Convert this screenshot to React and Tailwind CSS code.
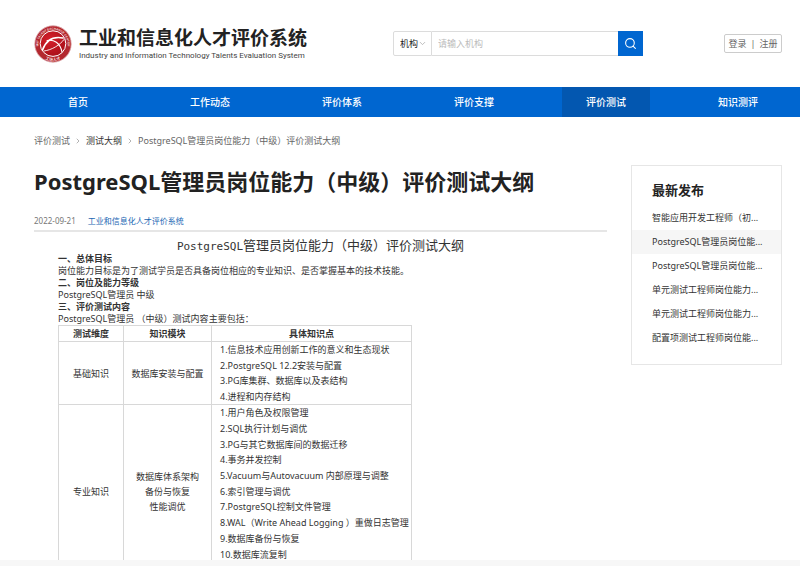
import React, { useState } from 'react';
import { ChevronDown, ChevronRight, Search } from 'lucide-react';

const navItems = ['首页', '工作动态', '评价体系', '评价支撑', '评价测试', '知识测评'];

const latest = [
  '智能应用开发工程师（初...',
  'PostgreSQL管理员岗位能...',
  'PostgreSQL管理员岗位能...',
  '单元测试工程师岗位能力...',
  '单元测试工程师岗位能力...',
  '配置项测试工程师岗位能...',
];

const sections = [
  { heading: '一、总体目标', text: '岗位能力目标是为了测试学员是否具备岗位相应的专业知识、是否掌握基本的技术技能。' },
  { heading: '二、岗位及能力等级', text: 'PostgreSQL管理员 中级' },
  { heading: '三、评价测试内容', text: 'PostgreSQL管理员 （中级）测试内容主要包括：' },
];

const outline = [
  {
    area: '基础知识',
    height: 'h-[62px]',
    modules: ['数据库安装与配置'],
    points: [
      '1.信息技术应用创新工作的意义和生态现状',
      '2.PostgreSQL 12.2安装与配置',
      '3.PG库集群、数据库以及表结构',
      '4.进程和内存结构',
    ],
  },
  {
    area: '专业知识',
    height: 'h-[157px] mb-4',
    modules: ['数据库体系架构', '备份与恢复', '性能调优'],
    points: [
      '1.用户角色及权限管理',
      '2.SQL执行计划与调优',
      '3.PG与其它数据库间的数据迁移',
      '4.事务并发控制',
      '5.Vacuum与Autovacuum 内部原理与调整',
      '6.索引管理与调优',
      '7.PostgreSQL控制文件管理',
      '8.WAL（Write Ahead Logging ）重做日志管理',
      '9.数据库备份与恢复',
      '10.数据库流复制',
    ],
  },
];

const Emblem = () => (
  <svg viewBox="0 0 38 38" className="size-[38px] shrink-0" aria-hidden="true">
    <defs>
      <path id="ring-top" d="M6.6 27 A14.6 14.6 0 1 1 31.4 27" />
      <path id="ring-bottom" d="M8 32 A17 17 0 0 0 30 32" />
      <radialGradient id="ball" cx="40%" cy="35%" r="70%">
        <stop offset="0%" stopColor="#d5202c" />
        <stop offset="100%" stopColor="#a80f18" />
      </radialGradient>
    </defs>
    <circle cx="19" cy="19" r="18.2" fill="#b3282f" stroke="#d9a5a8" strokeWidth="0.8" />
    <text fontSize="3" fontWeight="700" fill="#f3d9da" fontFamily="Liberation Sans, sans-serif">
      <textPath href="#ring-top" startOffset="50%" textAnchor="middle">MIIT TALENT EXCHANGE CENTER</textPath>
    </text>
    <text fontSize="4" fontWeight="700" fill="#f3d9da" fontFamily="Noto Sans CJK SC, sans-serif">
      <textPath href="#ring-bottom" startOffset="50%" textAnchor="middle">工信人才</textPath>
    </text>
    <circle cx="19" cy="18.6" r="12.8" fill="url(#ball)" stroke="#fff" strokeWidth="1" />
    <g fill="none" stroke="#fff" strokeLinecap="round">
      <path d="M8.5 25 C12 15.5 19 11 29 13" strokeWidth="1.7" />
      <path d="M13 15.5 C20 14 26 18 28 27" strokeWidth="1.1" />
      <path d="M10 26 C18 25 26 20 30 14.5" strokeWidth="0.9" />
    </g>
  </svg>
);

const Header = () => {
  const [keyword, setKeyword] = useState('');

  return (
    <header className="grid grid-cols-[359px_minmax(0,250px)_1fr] items-center pl-[34px] pr-[18px] h-[87px] shrink-0">
      <a href="#" className="flex items-center gap-[7px]">
        <Emblem />
        <span className="flex flex-col whitespace-nowrap">
          <span className="text-[19px] leading-6 font-bold text-[#222]">工业和信息化人才评价系统</span>
          <span className="font-[Roboto,sans-serif] text-[8px] leading-3 text-[#444]">Industry and Information Technology Talents Evaluation System</span>
        </span>
      </a>

      <form className="flex h-[25px]" onSubmit={(e) => e.preventDefault()}>
        <div className="relative flex items-center w-[39px] shrink-0 border border-[#dcdcdc] rounded-l-xs">
          <select aria-label="搜索类型" className="appearance-none w-full h-full pl-[6px] text-[9px] text-[#222] outline-none">
            <option>机构</option>
          </select>
          <ChevronDown size={9} strokeWidth={2} className="absolute right-1 text-[#aaa] pointer-events-none" />
        </div>
        <input
          aria-label="机构"
          value={keyword}
          onChange={(e) => setKeyword(e.target.value)}
          placeholder="请输入机构"
          className="flex-1 min-w-0 px-[6px] text-[9px] border-y border-[#dcdcdc] outline-none placeholder:text-[#bbb]"
        />
        <button type="submit" aria-label="搜索" className="flex items-center justify-center w-[25px] bg-[#0066d0] text-white">
          <Search size={13} strokeWidth={2} />
        </button>
      </form>

      <div className="justify-self-end flex items-center justify-center gap-1 w-[58px] h-[19px] text-[9px] text-[#666] border border-[#ccc] rounded-xs whitespace-nowrap">
        <a href="#">登录</a>
        <span>|</span>
        <a href="#">注册</a>
      </div>
    </header>
  );
};

const NavBar = () => (
  <nav className="flex justify-between pl-[34px] pr-[18px] h-[30px] shrink-0 bg-[#0066d0]">
    {navItems.map((item) => (
      <a
        key={item}
        href="#"
        className={`flex items-center justify-center w-[88px] text-[10px] font-medium text-white ${item === '评价测试' ? 'bg-[#0357b0]' : ''}`}
      >
        {item}
      </a>
    ))}
  </nav>
);

const OutlineTable = () => (
  <table className="w-[354px] text-[9px] leading-[15px] border-collapse whitespace-nowrap">
    <thead>
      <tr>
        <th className="w-[65px] p-0 border border-[#d8d8d8]">测试维度</th>
        <th className="w-[88px] p-0 border border-[#d8d8d8]">知识模块</th>
        <th className="p-0 border border-[#d8d8d8]">具体知识点</th>
      </tr>
    </thead>
    <tbody>
      {outline.map((row) => (
        <tr key={row.area}>
          <td className="p-0 text-center border border-[#d8d8d8]">{row.area}</td>
          <td className="p-0 text-center border border-[#d8d8d8]">
            {row.modules.map((m) => <div key={m}>{m}</div>)}
          </td>
          <td className="p-0 pl-2 border border-[#d8d8d8]">
            <ul className={`flex flex-col justify-around ${row.height}`}>
              {row.points.map((p) => <li key={p}>{p}</li>)}
            </ul>
          </td>
        </tr>
      ))}
    </tbody>
  </table>
);

const Article = () => (
  <article className="flex-1 min-w-0">
    <h1 className="mt-4 text-[22px] leading-8 font-bold text-[#222] whitespace-nowrap">
      PostgreSQL管理员岗位能力（中级）评价测试大纲
    </h1>
    <div className="flex gap-3 mt-4 pb-px text-[8px] leading-4 text-[#777] border-b-2 border-[#e6e6e6]">
      <time>2022-09-21</time>
      <a href="#" className="text-[#1a66b3]">工业和信息化人才评价系统</a>
    </div>
    <h2 className="pt-[7px] text-[13px] leading-3 text-center text-[#333]">
      <span className="font-['DejaVu_Sans_Mono',monospace] text-[11px]">PostgreSQL</span>管理员岗位能力（中级）评价测试大纲
    </h2>
    <div className="pl-6 text-[9px] leading-3 text-[#333]">
      {sections.map((s) => (
        <section key={s.heading}>
          <h3 className="font-bold">{s.heading}</h3>
          <p>{s.text}</p>
        </section>
      ))}
      <OutlineTable />
    </div>
  </article>
);

const Sidebar = () => (
  <aside className="w-[151px] shrink-0 self-start pt-3 pb-3.5 border border-[#e6e6e6] text-[#333]">
    <h2 className="px-5 mb-1 text-[13px] leading-6 font-bold text-[#222]">最新发布</h2>
    <ul className="text-[9px] leading-6">
      {latest.map((title, index) => (
        <li key={index} className={index === 1 ? 'bg-[#f6f6f6]' : ''}>
          <a href="#" className="block px-5 whitespace-nowrap">{title}</a>
        </li>
      ))}
    </ul>
  </aside>
);

export default function App() {
  return (
    <div className="flex flex-col h-screen bg-white font-['Noto_Sans','Noto_Sans_CJK_SC',sans-serif]">
      <Header />
      <NavBar />
      <main className="flex-1 min-h-0 overflow-hidden pl-[34px] pr-[18px] pt-4">
        <div className="flex items-center gap-1 text-[9px] leading-4 text-[#666]">
          <a href="#">评价测试</a>
          <ChevronRight size={8} strokeWidth={1.5} />
          <a href="#" className="text-[#333]">测试大纲</a>
          <ChevronRight size={8} strokeWidth={1.5} />
          <span>PostgreSQL管理员岗位能力（中级）评价测试大纲</span>
        </div>
        <div className="flex gap-6">
          <Article />
          <div className="pt-4 flex">
            <Sidebar />
          </div>
        </div>
      </main>
      <footer className="h-1.5 shrink-0 bg-[#f7f7f7]" />
    </div>
  );
}
